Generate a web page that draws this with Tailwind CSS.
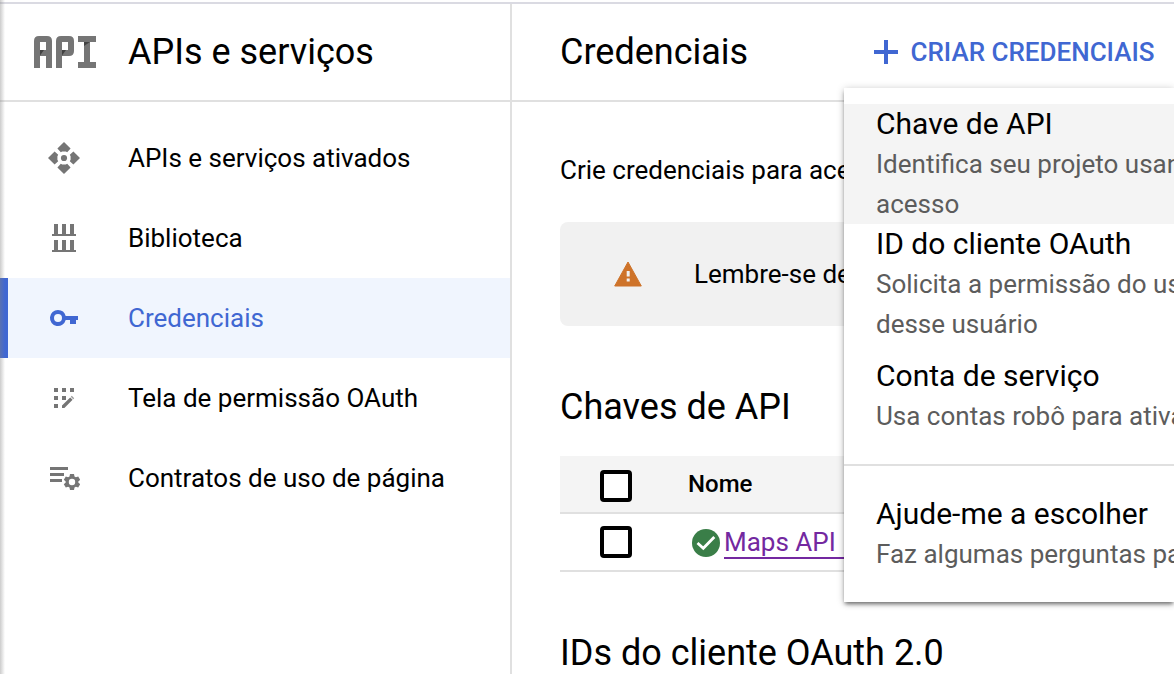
<!DOCTYPE html>
<html lang="pt-BR">
<head>
<meta charset="utf-8">
<title>Credenciais</title>
<script src="https://cdn.jsdelivr.net/npm/@tailwindcss/browser@4"></script>
</head>
<body class="relative h-[674px] w-[1174px] overflow-hidden bg-white font-['Roboto',sans-serif] text-[26px] leading-10 text-black">
<div class="flex h-full flex-col pt-0.5">
  <div class="h-0.5 shrink-0 bg-[#dadae2]"></div>
  <div class="flex min-h-0 flex-1">
    <aside class="flex w-[512px] shrink-0 flex-col border-r-2 border-[#e0e0e0]">
      <div class="flex h-[98px] shrink-0 items-center border-b-2 border-[#e0e0e0] pl-[34px]">
        <svg class="h-8 w-[62px]" viewBox="0 0 62 32" fill="#757575">
          <path fill-rule="evenodd" d="M0 32V5q0-5 5-5h8q5 0 5 5v27h-6V20H6v12zM6 6v8h6V6z"/>
          <path fill-rule="evenodd" d="M22 32V5q0-5 5-5h8q5 0 5 5v10q0 5-5 5h-7v12zM28 6v8h6V6z"/>
          <path d="M44 0h18v6h-6v20h6v6H44v-6h6V6h-6z"/>
          <path fill="#424242" d="M6 14h4l-4 5.5zM28 14h4l-4 5.5zM50 6h6l-6 4z"/>
        </svg>
        <div class="ml-8 text-[36px]">APIs e serviços</div>
      </div>
      <nav class="pt-4">
        <div class="flex h-20 items-center pl-12">
          <svg class="mr-12 size-8" viewBox="0 0 32 32" fill="#757575">
            <path id="p" d="M16 0l6.6 6.6-3.4 3.6-1.4-.8h-3.6l-1.4.8-3.4-3.6z"/>
            <use href="#p" transform="rotate(90 16 16)"/><use href="#p" transform="rotate(180 16 16)"/><use href="#p" transform="rotate(270 16 16)"/>
            <circle cx="16" cy="16" r="3.1"/>
          </svg>
          <span>APIs e serviços ativados</span>
        </div>
        <div class="flex h-20 items-center pl-12">
          <svg class="mr-12 size-8" viewBox="0 0 32 32" fill="#757575"><path d="M6 2h4v10h4V2h4v10h4V2h4v10h2v2H4v-2h2zM6 18h4v10h4V18h4v10h4V18h4v10h2v2H4v-2h2z"/></svg>
          <span>Biblioteca</span>
        </div>
        <div class="flex h-20 items-center border-l-8 border-[#4067d2] bg-[#f0f5fe] pl-10 text-[#4067d2]">
          <svg class="mr-12 size-8" viewBox="0 0 32 32" fill="currentColor"><path fill-rule="evenodd" d="M10 8a8 8 0 0 1 7.7 6H30v4h-2v4h-6v-4h-4.3A8 8 0 1 1 10 8zm0 4a4 4 0 1 0 0 8 4 4 0 0 0 0-8z"/></svg>
          <span>Credenciais</span>
        </div>
        <div class="flex h-20 items-center pl-12">
          <svg class="mr-12 size-8" viewBox="0 0 32 32" fill="#757575"><path d="M6 6h4v4H6zM14 6h4v4h-4zM22 6h4v4h-4zM6 14h4v4H6zM14 14h4v4h-4zM6 22h4v4H6zM14 26v-2.4l8.2-8.2 2.4 2.4-8.2 8.2z"/><path fill-opacity=".75" d="M22.8 14.8l1-1 2.4 2.4-1 1z"/></svg>
          <span>Tela de permissão OAuth</span>
        </div>
        <div class="flex h-20 items-center pl-12">
          <svg class="mr-12 size-8" viewBox="0 0 32 32" fill="#757575"><path d="M2 5h18v3H2zM2 11h14v3H2zM2 17h12v3H2z"/>
            <path fill-rule="evenodd" d="M22 12h4l.5 2.4 1.4.8 2.3-.8 2 3.4-1.9 1.6v1.2l1.9 1.6-2 3.4-2.3-.8-1.4.8L26 28h-4l-.5-2.4-1.4-.8-2.3.8-2-3.4 1.9-1.6v-1.2l-1.9-1.6 2-3.4 2.3.8 1.4-.8zm2 4.8a3.2 3.2 0 1 0 0 6.4 3.2 3.2 0 0 0 0-6.4z"/></svg>
          <span>Contratos de uso de página</span>
        </div>
      </nav>
    </aside>
    <main class="min-w-0 flex-1 whitespace-nowrap">
      <div class="flex h-[98px] items-center border-b-2 border-[#e0e0e0] pl-12">
        <h1 class="w-[314px] text-[36px]">Credenciais</h1>
        <button class="flex items-center font-medium text-[#4067d2]">
          <svg class="mr-[12.5px] h-6 w-6" viewBox="0 0 24 24" fill="currentColor"><path d="M10 0h4v10h10v4H14v10h-4V14H0v-4h10z"/></svg>
          CRIAR CREDENCIAIS
        </button>
      </div>
      <div class="pl-12 pt-12">
        <p>Crie credenciais para ace</p>
        <div class="mt-8 flex h-[104px] items-center rounded-lg bg-[#f1f1f1] pl-[54px]">
          <svg class="mr-[52px] h-[26px] w-7" viewBox="0 0 28 26"><path fill="#ce732a" stroke="#ce732a" stroke-linejoin="round" d="M14 1l13.3 24H.7z"/><path fill="#f1f1f1" d="M12.7 10h3v5.5h-3zM12.7 17.5h3v3h-3z"/></svg>
          <span>Lembre-se de</span>
        </div>
        <h2 class="mt-[61px] text-[36px]">Chaves de API</h2>
        <div class="mt-[29px] flex h-[58px] items-center border-b-2 border-[#e0e0e0] bg-[#f4f4f4] pl-10">
          <span class="mr-14 mt-1 size-8 rounded border-4 border-black bg-white"></span>
          <span class="text-[24px] font-medium">Nome</span>
        </div>
        <div class="flex h-[58px] items-center border-b-2 border-[#e0e0e0] pl-10">
          <span class="mr-[60px] size-8 rounded border-4 border-black"></span>
          <svg class="mr-1 mt-0.5 size-7" viewBox="0 0 28 28"><circle cx="14" cy="14" r="14" fill="#3a7e48"/><path d="M5.5 14l5.8 5.3L22.3 8" fill="none" stroke="#fff" stroke-width="2.8"/></svg>
          <a class="mt-px h-[33px] w-32 border-b-2 border-[#7328a0] leading-8 text-[#7328a0]">Maps API</a>
        </div>
        <h2 class="mt-[61px] text-[36px]">IDs do cliente OAuth 2.0</h2>
      </div>
    </main>
  </div>
</div>
<!-- Create-credentials menu -->
<div class="absolute left-[844px] top-[88px] h-[514px] w-[330px] whitespace-nowrap bg-white pt-4 text-[#5c5c5c] shadow-[0_3px_4px_-1px_rgba(0,0,0,0.5),0_1px_8px_rgba(0,0,0,0.2)]">
  <div class="h-[120px] overflow-hidden bg-[#f4f4f4] pl-8">
    <div class="text-[30px] text-black">Chave de API</div>
    <div>Identifica seu projeto usan</div>
    <div>acesso</div>
  </div>
  <div class="h-[132px] overflow-hidden pl-8">
    <div class="text-[30px] text-black">ID do cliente OAuth</div>
    <div>Solicita a permissão do us</div>
    <div>desse usuário</div>
  </div>
  <div class="h-[108px] overflow-hidden pl-8">
    <div class="text-[30px] text-black">Conta de serviço</div>
    <div>Usa contas robô para ativa</div>
  </div>
  <div class="h-0.5 bg-[#e0e0e0]"></div>
  <div class="overflow-hidden pl-8 pt-7">
    <div class="text-[30px] text-black">Ajude-me a escolher</div>
    <div>Faz algumas perguntas pa</div>
  </div>
</div>
<!-- Edge shadow -->
<div class="absolute inset-y-0 left-0 w-[5px] bg-gradient-to-r from-[#808080]/40 to-transparent"></div>
</body>
</html>
